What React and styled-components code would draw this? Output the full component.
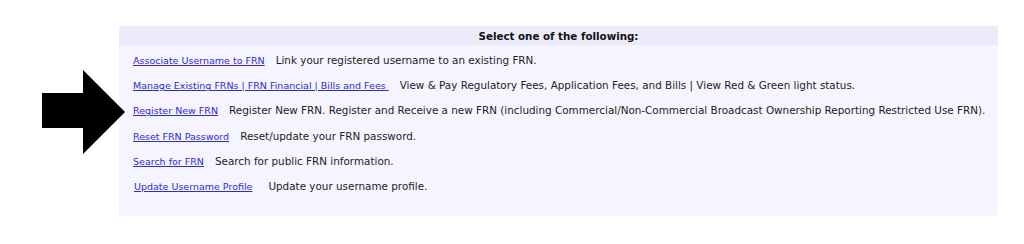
import React from "react";
import styled, { createGlobalStyle } from "styled-components";

const GlobalStyle = createGlobalStyle`
  html, body {
    margin: 0;
    padding: 0;
    background: #ffffff;
  }
  body {
    font-family: "DejaVu Sans", Verdana, sans-serif;
  }
`;

const Page = styled.div`
  width: 1024px;
  height: 244px;
  display: flex;
  align-items: flex-start;
  padding: 26px 0 0 40px;
  box-sizing: border-box;
`;

const Arrow = styled.svg`
  flex: none;
  margin-top: 44px;
  margin-right: -7px;
  position: relative;
  z-index: 1;
`;

const Panel = styled.div`
  width: 879px;
  height: 190px;
  background: #f6f4fe;
  display: flex;
  flex-direction: column;
`;

const Header = styled.div`
  height: 19px;
  background: #ecebfb;
  display: flex;
  align-items: center;
  justify-content: center;
  font-size: 10.3px;
  font-weight: bold;
  color: #111;
`;

const List = styled.div`
  display: flex;
  flex-direction: column;
  padding: 7px 0 0 14px;
`;

const Row = styled.div`
  display: flex;
  align-items: baseline;
  height: 25.2px;
  line-height: 16px;
  gap: ${(p) => p.$gap || 11}px;
  padding-left: ${(p) => p.$indent || 0}px;
  font-size: 10.4px;
  color: #1c1c1c;
  white-space: nowrap;
`;

const Link = styled.a`
  color: #2b2bd8;
  text-decoration: underline;
  font-size: 9.5px;
  cursor: pointer;
`;

const Desc = styled.span``;

const items = [
  { link: "Associate Username to FRN", desc: "Link your registered username to an existing FRN." },
  {
    link: "Manage Existing FRNs | FRN Financial | Bills and Fees\u00a0",
    desc: "View & Pay Regulatory Fees, Application Fees, and Bills | View Red & Green light status.",
  },
  {
    link: "Register New FRN",
    desc: "Register New FRN. Register and Receive a new FRN (including Commercial/Non-Commercial Broadcast Ownership Reporting Restricted Use FRN).",
  },
  { link: "Reset FRN Password", desc: "Reset/update your FRN password." },
  { link: "Search for FRN", desc: "Search for public FRN information." },
  { link: "Update Username Profile", desc: "Update your username profile.", gap: 16, indent: 1 },
];

export default function App() {
  return (
    <>
      <GlobalStyle />
      <Page>
        <Arrow width="86" height="84" viewBox="0 0 86 84">
          <polygon points="2,23 43,23 43,0 85,42 43,84 43,58 2,58" fill="#000" />
        </Arrow>
        <Panel>
          <Header>Select one of the following:</Header>
          <List>
            {items.map((it) => (
              <Row key={it.link} $gap={it.gap} $indent={it.indent}>
                <Link href="#">{it.link}</Link>
                <Desc>{it.desc}</Desc>
              </Row>
            ))}
          </List>
        </Panel>
      </Page>
    </>
  );
}
